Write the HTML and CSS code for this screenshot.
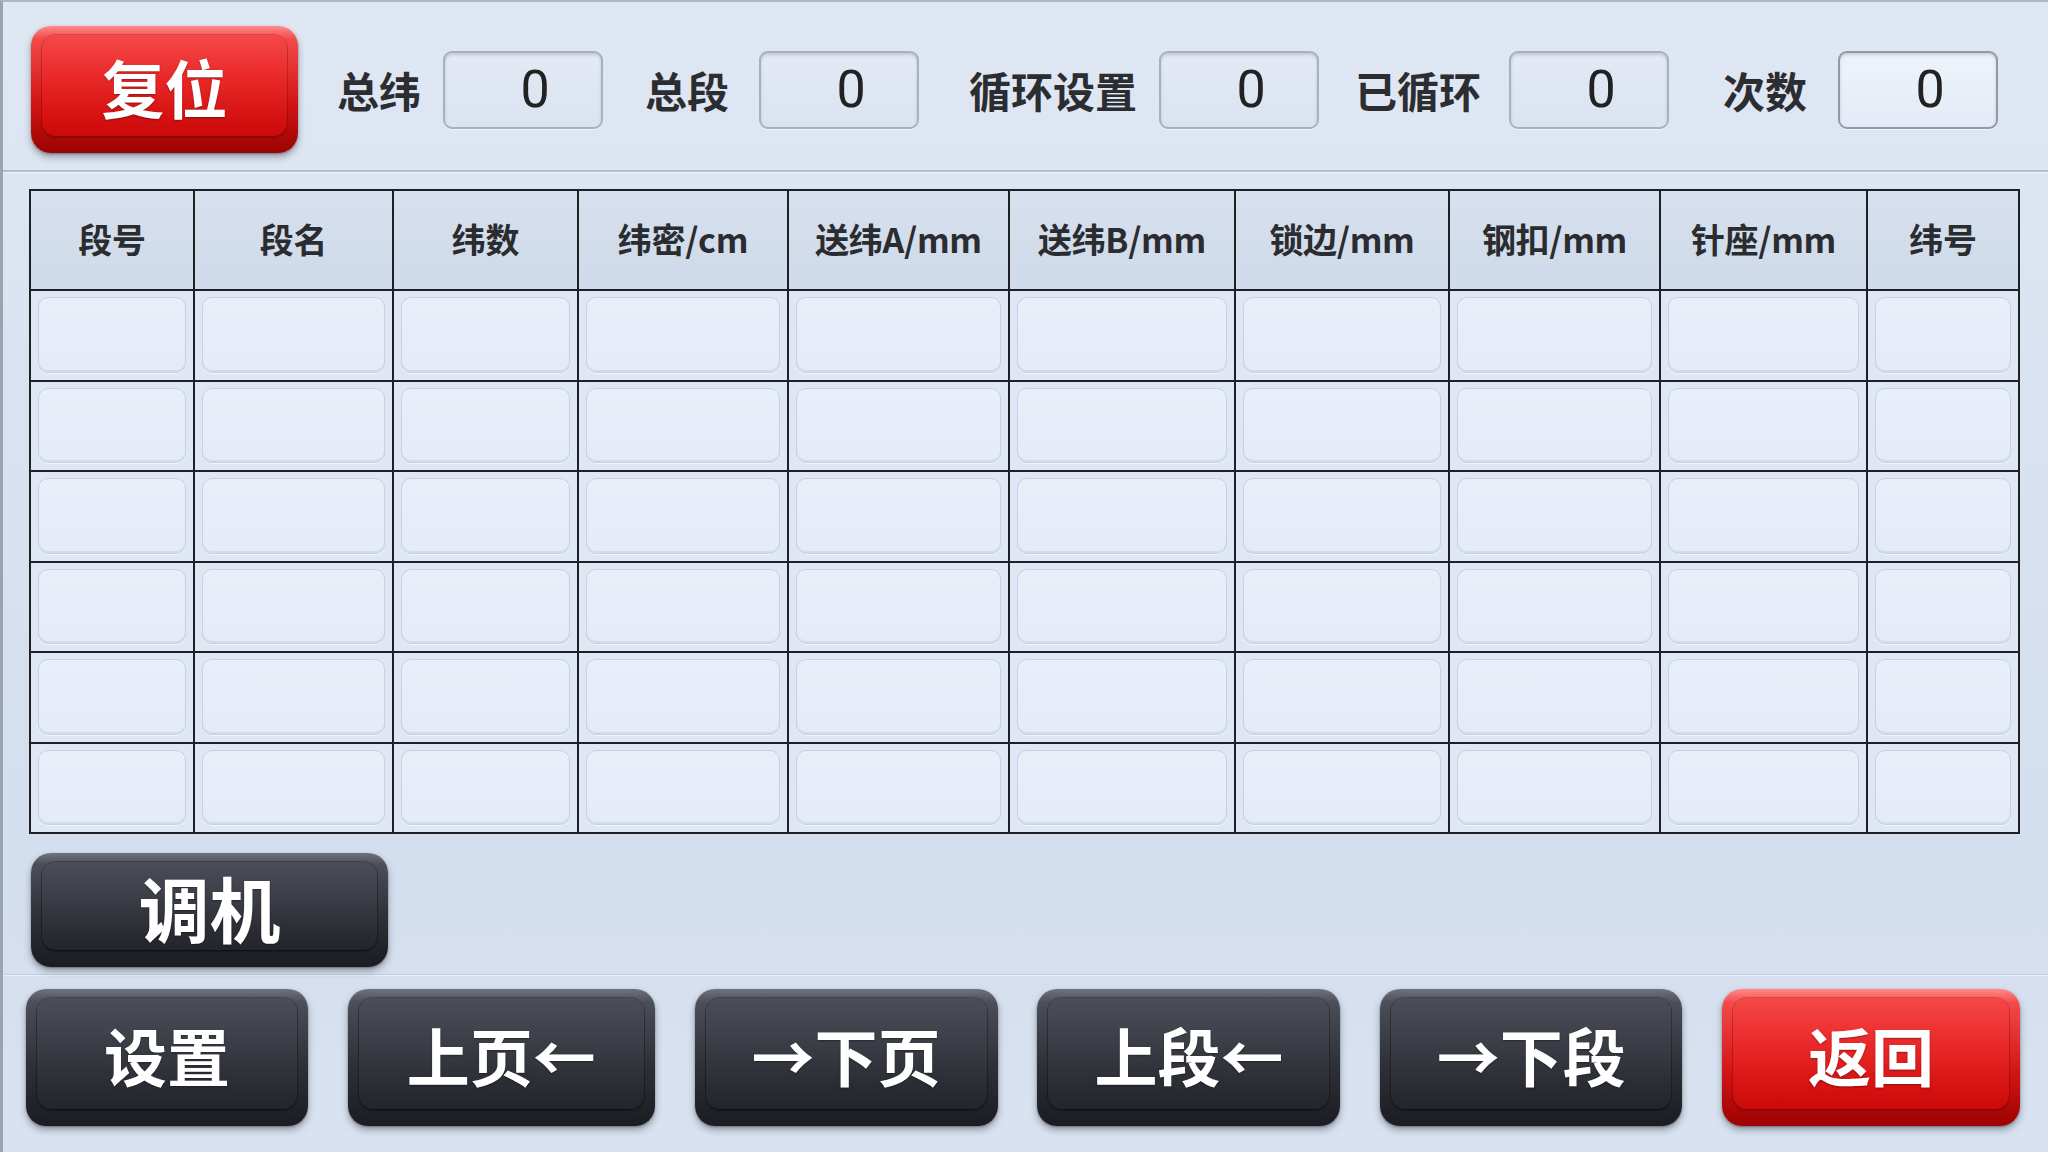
FILE: index.html
```html
<!DOCTYPE html>
<html lang="zh-CN">
<head>
<meta charset="utf-8">
<title>段设置</title>
<link rel="stylesheet" href="styles.css">
</head>
<body>
<div class="screen">
  <div class="topbar">
    <div class="key key-red key-reset"><div class="face">复位</div></div>
    <div class="fields">
      <div class="field f1"><span class="label">总纬</span><div class="num">0</div></div>
      <div class="field f2"><span class="label">总段</span><div class="num">0</div></div>
      <div class="field f3"><span class="label">循环设置</span><div class="num">0</div></div>
      <div class="field f4"><span class="label">已循环</span><div class="num">0</div></div>
      <div class="field f5"><span class="label">次数</span><div class="num num-active">0</div></div>
    </div>
  </div>

  <div class="table">
    <div class="th">段号</div>
    <div class="th">段名</div>
    <div class="th">纬数</div>
    <div class="th">纬密/cm</div>
    <div class="th">送纬A/mm</div>
    <div class="th">送纬B/mm</div>
    <div class="th">锁边/mm</div>
    <div class="th">钢扣/mm</div>
    <div class="th">针座/mm</div>
    <div class="th">纬号</div>

    <div class="td"><div class="slot"></div></div><div class="td"><div class="slot"></div></div><div class="td"><div class="slot"></div></div><div class="td"><div class="slot"></div></div><div class="td"><div class="slot"></div></div><div class="td"><div class="slot"></div></div><div class="td"><div class="slot"></div></div><div class="td"><div class="slot"></div></div><div class="td"><div class="slot"></div></div><div class="td"><div class="slot"></div></div>
    <div class="td"><div class="slot"></div></div><div class="td"><div class="slot"></div></div><div class="td"><div class="slot"></div></div><div class="td"><div class="slot"></div></div><div class="td"><div class="slot"></div></div><div class="td"><div class="slot"></div></div><div class="td"><div class="slot"></div></div><div class="td"><div class="slot"></div></div><div class="td"><div class="slot"></div></div><div class="td"><div class="slot"></div></div>
    <div class="td"><div class="slot"></div></div><div class="td"><div class="slot"></div></div><div class="td"><div class="slot"></div></div><div class="td"><div class="slot"></div></div><div class="td"><div class="slot"></div></div><div class="td"><div class="slot"></div></div><div class="td"><div class="slot"></div></div><div class="td"><div class="slot"></div></div><div class="td"><div class="slot"></div></div><div class="td"><div class="slot"></div></div>
    <div class="td"><div class="slot"></div></div><div class="td"><div class="slot"></div></div><div class="td"><div class="slot"></div></div><div class="td"><div class="slot"></div></div><div class="td"><div class="slot"></div></div><div class="td"><div class="slot"></div></div><div class="td"><div class="slot"></div></div><div class="td"><div class="slot"></div></div><div class="td"><div class="slot"></div></div><div class="td"><div class="slot"></div></div>
    <div class="td"><div class="slot"></div></div><div class="td"><div class="slot"></div></div><div class="td"><div class="slot"></div></div><div class="td"><div class="slot"></div></div><div class="td"><div class="slot"></div></div><div class="td"><div class="slot"></div></div><div class="td"><div class="slot"></div></div><div class="td"><div class="slot"></div></div><div class="td"><div class="slot"></div></div><div class="td"><div class="slot"></div></div>
    <div class="td"><div class="slot"></div></div><div class="td"><div class="slot"></div></div><div class="td"><div class="slot"></div></div><div class="td"><div class="slot"></div></div><div class="td"><div class="slot"></div></div><div class="td"><div class="slot"></div></div><div class="td"><div class="slot"></div></div><div class="td"><div class="slot"></div></div><div class="td"><div class="slot"></div></div><div class="td"><div class="slot"></div></div>
  </div>

  <div class="middle">
    <div class="key key-dark key-tune"><div class="face face-big">调机</div></div>
  </div>

  <div class="bottombar">
    <div class="key key-dark w282"><div class="face">设置</div></div>
    <div class="key key-dark w307"><div class="face">上页←</div></div>
    <div class="key key-dark w303"><div class="face">→下页</div></div>
    <div class="key key-dark w303"><div class="face">上段←</div></div>
    <div class="key key-dark w302"><div class="face">→下段</div></div>
    <div class="key key-red w298"><div class="face">返回</div></div>
  </div>
</div>
</body>
</html>
```

FILE: styles.css
```css
html, body {
  margin: 0;
  padding: 0;
  width: 2048px;
  height: 1152px;
  overflow: hidden;
}

body {
  font-family: "Noto Sans CJK SC", "Noto Sans", sans-serif;
  background: #d9e2f0;
}

.screen {
  width: 2048px;
  height: 1152px;
  box-sizing: border-box;
  border-left: 3px solid #9aa3b1;
  border-top: 2px solid #aeb7c4;
  background: linear-gradient(180deg, #dfe7f3 0%, #d8e2f0 40%, #d3deee 75%, #d9e2f0 100%);
  display: flex;
  flex-direction: column;
}

/* ---------- top bar ---------- */
.topbar {
  height: 170px;
  box-sizing: border-box;
  padding: 7px 50px 0 28px;
  display: flex;
  align-items: center;
  border-bottom: 2px solid #b3bdcb;
  box-shadow: 0 1px 0 #eef3fa;
}

.fields {
  flex: 1;
  display: flex;
  align-items: center;
}

.field {
  display: flex;
  align-items: center;
  gap: 22px;
}

.f1 { margin-left: 39px; }
.f2 { margin-left: 42px; gap: 30px; }
.f3 { margin-left: 50px; }
.f4 { margin-left: 36px; gap: 28px; }
.f5 { margin-left: 54px; gap: 31px; }

.label {
  font-size: 42px;
  font-weight: 700;
  color: #2c2d30;
  line-height: 1;
  white-space: nowrap;
}

.num {
  width: 160px;
  height: 78px;
  box-sizing: border-box;
  border: 2px solid #a8b0bc;
  border-radius: 9px;
  background: linear-gradient(180deg, #e3eaf5 0%, #dae3f0 100%);
  box-shadow: inset 0 2px 3px rgba(90, 100, 120, 0.25), 0 1px 0 #f0f4fa;
  font-family: Roboto, "Liberation Sans", sans-serif;
  font-size: 52px;
  font-weight: 400;
  color: #222;
  display: flex;
  align-items: center;
  justify-content: center;
  padding-left: 24px;
}

.num-active {
  background: linear-gradient(180deg, #eef3fb 0%, #e4ebf6 100%);
  border-color: #9199a5;
}

/* ---------- table ---------- */
.table {
  margin: 17px 0 0 26px;
  width: 1991px;
  box-sizing: border-box;
  display: grid;
  grid-template-columns: 164px 199px 185px 210px 221px 226px 214px 211px 207px 152px;
  grid-template-rows: 100px repeat(6, 90.5px);
  border-left: 2px solid #1f2023;
  border-top: 2px solid #1f2023;
}

.th, .td {
  box-sizing: border-box;
  border-right: 2px solid #1f2023;
  border-bottom: 2px solid #1f2023;
}

.th {
  background: linear-gradient(180deg, #d6e0ee 0%, #cfdaea 100%);
  display: flex;
  align-items: center;
  justify-content: center;
  font-size: 34px;
  font-weight: 700;
  color: #2b2c2f;
  white-space: nowrap;
  padding-bottom: 4px;
  letter-spacing: -0.3px;
}

.td {
  background: #dfe7f4;
  padding: 6px 7px 7px 7px;
  display: flex;
}

.slot {
  flex: 1;
  border-radius: 10px;
  border: 1px solid #c6d1e2;
  background: linear-gradient(180deg, #e9eff9 0%, #e4ebf7 100%);
  box-shadow: inset 0 -2px 0 #d3dcea, 0 1px 0 #f3f6fb;
}

/* ---------- middle / bottom ---------- */
.middle {
  height: 141px;
  box-sizing: border-box;
  padding: 19px 0 0 28px;
  border-bottom: 1px solid #c5cfdd;
  box-shadow: 0 1px 0 #e8eef7;
}

.bottombar {
  padding: 14px 28px 0 23px;
  display: flex;
  justify-content: space-between;
}

/* ---------- keycap buttons ---------- */
.key {
  box-sizing: border-box;
  border-radius: 20px;
  padding: 9px 11px 17px 11px;
  box-shadow: 0 4px 7px rgba(20, 25, 40, 0.35), 0 1px 2px rgba(0, 0, 0, 0.3);
}

.key .face {
  height: 100%;
  border-radius: 14px;
  display: flex;
  align-items: center;
  justify-content: center;
  color: #fff;
  font-size: 63px;
  font-weight: 700;
  line-height: 1;
  white-space: nowrap;
  text-shadow: 0 1px 2px rgba(0, 0, 0, 0.35);
}

.key .face-big {
  font-size: 71px;
}

.key-dark {
  background: linear-gradient(180deg, #70737e 0%, #4b4e58 10%, #2f3138 55%, #1b1c21 100%);
}

.key-dark .face {
  background: linear-gradient(180deg, #4b4e58 0%, #3a3c45 45%, #2a2c33 80%, #24252b 100%);
  box-shadow: 0 0 0 1px rgba(0, 0, 0, 0.25), 0 2px 2px rgba(0, 0, 0, 0.3);
}

.key-red {
  background: linear-gradient(180deg, #ff8a8a 0%, #f24a4a 10%, #d41515 60%, #9c0202 100%);
}

.key-red .face {
  background: linear-gradient(180deg, #f54848 0%, #ea2a2a 40%, #d61212 80%, #cc0a0a 100%);
  box-shadow: 0 0 0 1px rgba(120, 0, 0, 0.25), 0 2px 2px rgba(90, 0, 0, 0.35);
}

.key-reset {
  width: 267px;
  height: 127px;
  flex: none;
}

.key-tune {
  width: 357px;
  height: 114px;
}

.bottombar .key { height: 137px; }
.w282 { width: 282px; }
.w307 { width: 307px; }
.w303 { width: 303px; }
.w302 { width: 302px; }
.w298 { width: 298px; }
```
